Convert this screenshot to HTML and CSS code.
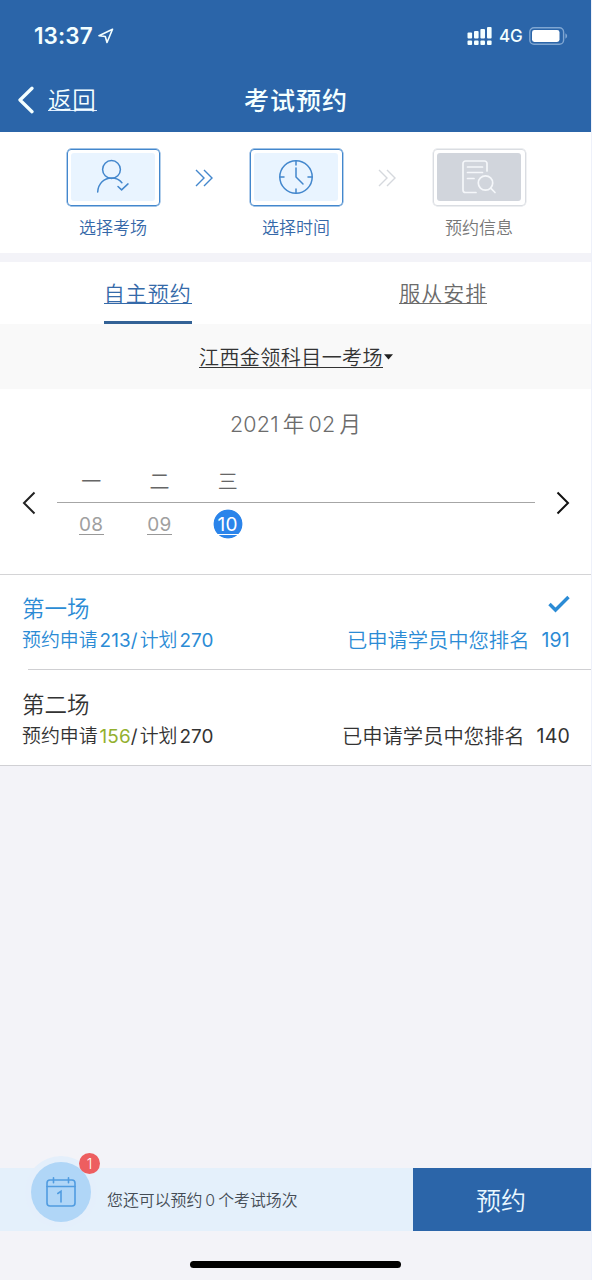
FILE: index.html
```html
<!DOCTYPE html>
<html lang="zh-CN">
<head>
<meta charset="utf-8">
<title>考试预约</title>
<link rel="stylesheet" href="styles.css">
</head>
<body>
<div class="app">
  <header class="header">
    <div class="status">
      <span class="clock">13:37</span>
      <svg class="location" width="16" height="16" viewBox="0 0 16 16"><path d="M14.500 1.300 1 7.700l6.300.8 1.700 6z" fill="none" stroke="currentColor" stroke-width="1.600" stroke-linejoin="round"/></svg>
      <svg class="signal" width="26" height="20" viewBox="0 0 26 20" fill="currentColor"><rect x="0.5" y="6.5" width="4.6" height="6" rx="1"/><rect x="7" y="5" width="4.6" height="7.5" rx="1"/><rect x="13.4" y="3" width="4.6" height="9.5" rx="1"/><rect x="20" y="1" width="4.6" height="11.5" rx="1"/><rect x="0.5" y="14.5" width="4.6" height="4.6" rx="1"/><rect x="7" y="14.5" width="4.6" height="4.6" rx="1"/><rect x="13.4" y="14.5" width="4.6" height="4.6" rx="1"/><rect x="20" y="14.5" width="4.6" height="4.6" rx="1"/></svg>
      <span class="network">4G</span>
      <svg class="battery" width="39" height="18" viewBox="0 0 39 18"><rect x="0.8" y="0.8" width="33.8" height="16.4" rx="4.2" fill="none" stroke="#7fa6d2" stroke-width="1.4"/><rect x="3" y="3" width="27.5" height="12" rx="2.4" fill="#fff"/><path d="M36.4 6.2q1.8 1 1.8 2.8t-1.8 2.8z" fill="#7fa6d2"/></svg>
    </div>
    <nav class="navbar">
      <a class="back"><svg width="18" height="28" viewBox="0 0 18 28"><path d="M15 2.3 3 14l12 11.7" fill="none" stroke="currentColor" stroke-width="3.3" stroke-linecap="round" stroke-linejoin="round"/></svg><span class="back-text">返回</span></a>
      <h1 class="title">考试预约</h1>
    </nav>
  </header>

  <section class="steps">
    <div class="step">
      <div class="step-box"><div class="step-fill"><svg width="36" height="36" viewBox="0 0 36 36" fill="none" stroke="currentColor" stroke-width="1.5" stroke-linecap="round" stroke-linejoin="round"><circle cx="16.5" cy="10.5" r="8.9"/><path d="M2.700 33c.5-8.500 6.500-14 13.800-14 4.200 0 8 1.700 10.400 4.700M23 27.500l3.600 3.400 6.400-6"/></svg></div></div>
      <span class="step-label">选择考场</span>
    </div>
    <svg class="chevrons" width="20" height="20" viewBox="0 0 20 20"><path d="M1 2l8 8-8 8M9 2l8 8-8 8" fill="none" stroke="currentColor" stroke-width="1.4"/></svg>
    <div class="step">
      <div class="step-box"><div class="step-fill"><svg width="36" height="36" viewBox="0 0 36 36" fill="none" stroke="currentColor" stroke-width="1.5" stroke-linecap="round"><circle cx="18" cy="18" r="16.200"/><path d="M18 2v4M18 30v4M2 18h4M30 18h4M18 9v9l7 7"/></svg></div></div>
      <span class="step-label">选择时间</span>
    </div>
    <svg class="chevrons chevrons-off" width="20" height="20" viewBox="0 0 20 20"><path d="M1 2l8 8-8 8M9 2l8 8-8 8" fill="none" stroke="currentColor" stroke-width="1.4"/></svg>
    <div class="step step-off">
      <div class="step-box"><div class="step-fill"><svg width="36" height="36" viewBox="0 0 36 36" fill="none" stroke="currentColor" stroke-width="1.7" stroke-linecap="round" stroke-linejoin="round"><path d="M26 12V4.500a2.500 2.500 0 0 0-2.500-2.500H4.500A2.500 2.500 0 0 0 2 4.500V31a2.500 2.500 0 0 0 2.500 2.500H15M6.500 8h15M6.500 13.500h15M6.500 19.500H13"/><circle cx="24.500" cy="24" r="7.200"/><path d="M29.700 29.200 34 33.500"/></svg></div></div>
      <span class="step-label">预约信息</span>
    </div>
  </section>

  <nav class="tabs">
    <a class="tab tab-active"><span class="tab-text">自主预约</span></a>
    <a class="tab"><span class="tab-text">服从安排</span></a>
  </nav>

  <div class="venue"><span class="venue-name">江西金领科目一考场</span><svg width="9" height="6" viewBox="0 0 9 6"><path d="M0 .2h9L4.500 5.500z" fill="#222"/></svg></div>

  <section class="calendar">
    <div class="month"><span>2021</span><span>年</span><span>02</span><span>月</span></div>
    <div class="week">
      <svg class="arrow" width="14" height="24" viewBox="0 0 14 24"><path d="M12.500 1.500 2 12l10.500 10.500" fill="none" stroke="#222" stroke-width="2"/></svg>
      <div class="days">
        <div class="day-row names"><span>一</span><span>二</span><span>三</span></div>
        <div class="day-row dates"><span><a class="date">08</a></span><span><a class="date">09</a></span><span class="selected"><a class="date">10</a></span></div>
      </div>
      <svg class="arrow" width="14" height="24" viewBox="0 0 14 24"><path d="M1.500 1.500 12 12 1.500 22.500" fill="none" stroke="#111" stroke-width="2"/></svg>
    </div>
  </section>

  <section class="sessions">
    <article class="session session-on">
      <div class="session-head"><h2 class="session-name">第一场</h2><svg width="22" height="18" viewBox="0 0 22 18"><path d="M1.500 9l6 6L20.500 2" fill="none" stroke="currentColor" stroke-width="3.400"/></svg></div>
      <div class="session-info"><p class="quota"><span>预约申请</span><span class="num">213/</span><span>计划</span><span class="num">270</span></p><p class="rank"><span>已申请学员中您排名</span><span class="rank-num">191</span></p></div>
    </article>
    <article class="session">
      <div class="session-head"><h2 class="session-name">第二场</h2></div>
      <div class="session-info"><p class="quota"><span>预约申请</span><span class="num"><span class="open">156</span>/</span><span>计划</span><span class="num">270</span></p><p class="rank"><span>已申请学员中您排名</span><span class="rank-num">140</span></p></div>
    </article>
  </section>

  <footer class="footer">
    <div class="bar">
      <div class="remain">
        <div class="calendar-halo"><div class="calendar-icon"><svg width="30" height="30" viewBox="0 0 30 30" fill="none" stroke="currentColor" stroke-width="1.600" stroke-linecap="round"><rect x="1" y="3" width="28" height="26" rx="3"/><path d="M1 9.500h28M7.500.800v5M22.500.800v5"/><path d="M11.800 16.500l3.200-2.200v10.700"/></svg></div><span class="badge">1</span></div>
        <p class="remain-text"><span>您还可以预约</span><span class="remain-num">0</span><span>个考试场次</span></p>
      </div>
      <button class="book">预约</button>
    </div>
    <div class="home"></div>
  </footer>
</div>
</body>
</html>
```
FILE: styles.css
```css
* { box-sizing: border-box; margin: 0; padding: 0; }
body {
  background: #f3f3f8;
  font-family: Inter, "Noto Sans CJK SC", sans-serif;
  font-weight: 350;
  color: #333;
}
svg { display: block; flex: none; }
.app { width: 592px; height: 1280px; display: flex; flex-direction: column; border-right: 1px solid #eef1fa; overflow: hidden; }

.header { height: 131.5px; background: #2b65a9; color: #f4ffff; }
.status { height: 70px; display: flex; align-items: center; padding: 2px 23px 0 34px; }
.clock { font-size: 22.5px; font-weight: 600; width: 59px; white-space: nowrap; letter-spacing: .1px; margin-top: -1px; }
.location { margin: 0 0 0 5px; }
.signal { margin-left: auto; }
.network { font-size: 17px; font-weight: 500; width: 24px; margin: 0 6px 0 6px; letter-spacing: -.2px; }
.navbar { height: 60px; display: grid; grid-template-columns: 1fr auto 1fr; align-items: center; padding: 0 17px; }
.back { display: flex; align-items: center; gap: 13px; }
.back-text { font-size: 23.5px; letter-spacing: .8px; line-height: 27px; height: 24px; border-bottom: 1.500px solid #dcecff; margin-top: -2px; }
.title { font-size: 25px; font-weight: 500; letter-spacing: 1px; line-height: 36px; margin-top: 1px; padding-left: 1px; }

.steps { height: 121.500px; background: #fff; display: flex; justify-content: center; padding: 17px 0 0 1px; gap: 35px; color: #4387cd; }
.step { width: 93px; display: flex; flex-direction: column; align-items: center; gap: 9px; }
.step-box { width: 93px; height: 57px; padding: 3.500px; border: 1.500px solid #4387cd; border-radius: 4px; box-shadow: 0 0 0 .4px currentColor; }
.step-fill { height: 100%; background: #e9f4ff; border-radius: 3px; display: flex; align-items: center; justify-content: center; }
.step-label { font-size: 17px; line-height: 26px; color: #3668a8; white-space: nowrap; }
.chevrons { margin-top: 19px; }
.chevrons-off { color: #d5d8dd; }
.step-off { color: #f5f7fa; }
.step-off .step-box { border-color: #dadde2; box-shadow: 0 0 0 .4px #dadde2; }
.step-off .step-fill { background: #d1d5dc; }
.step-off .step-label { color: #777; }

.tabs { height: 71px; background: #fff; border-top: 9px solid #f3f3f8; display: grid; grid-template-columns: 1fr 1fr; justify-items: center; color: #6b6b6b; }
.tab { width: 88px; height: 62px; padding-top: 19px; }
.tab-text { display: block; height: 23px; line-height: 26px; font-size: 21px; letter-spacing: 1px; white-space: nowrap; border-bottom: 1.500px solid currentColor; }
.tab-active { color: #356aa9; border-bottom: 3px solid #336296; }

.venue { height: 65px; background: #f9f9f9; display: flex; align-items: center; justify-content: center; gap: 1px; color: #333; padding-left: 1px; }
.venue-name { font-size: 20px; letter-spacing: .45px; line-height: 26px; height: 23px; border-bottom: 1.500px solid #333; white-space: nowrap; }

.calendar { height: 186px; background: #fff; border-bottom: 1px solid #d4d4d6; padding-top: 20px; }
.month { display: flex; justify-content: center; gap: 4px; font-size: 21.500px; line-height: 30px; color: #6c6c6c; letter-spacing: .2px; }
.week { display: flex; align-items: center; justify-content: space-between; padding: 26px 21px 0 22px; }
.arrow { margin-top: -2px; }
.days { width: 478px; }
.day-row { display: flex; }
.day-row > span { width: 68.300px; height: 36px; display: flex; align-items: center; justify-content: center; }
.names { border-bottom: 1px solid #a6a6a6; height: 38px; font-size: 20px; color: #666; align-items: flex-start; }
.names > span { height: 31px; }
.dates { padding-top: 3px; }
.date { font-size: 19px; font-weight: 400; line-height: 22px; height: 21px; border-bottom: 1.500px solid #999; color: #a0a0a0; letter-spacing: .3px; width: 25px; text-align: center; }
.selected { background: radial-gradient(circle at 50% 50%, #2b84ea 14px, transparent 14.800px) no-repeat; }
.selected .date { color: #fff; border-color: #fff; }

.sessions { background: #fff; border-bottom: 1px solid #d0d0d4; }
.session { height: 95px; padding: 20px 21px 0 22px; color: #333; }
.session-on { padding-top: 19px; color: #2b8bd5; background: linear-gradient(#cfcfd2, #cfcfd2) 28px 100% / 564px 1px no-repeat; }
.session-head { display: flex; justify-content: space-between; height: 32px; }
.session-head svg { margin-top: 1px; }
.session-name { font-size: 22.500px; font-weight: 350; line-height: 30px; }
.session-info { display: flex; justify-content: space-between; line-height: 29px; white-space: nowrap; }
.quota { display: flex; gap: 2px; font-size: 18.900px; }
.num { font-weight: 380; letter-spacing: .1px; }
.open { color: #93b02e; }
.rank { display: flex; gap: 12px; font-size: 20.300px; }
.rank-num { font-size: 19.500px; font-weight: 380; letter-spacing: .2px; }

.footer { margin-top: auto; height: 112px; display: flex; flex-direction: column; align-items: center; }
.bar { width: 591px; height: 63px; display: flex; background: #e4f0fb; }
.remain { flex: 1; display: flex; align-items: center; padding-left: 25px; }
.calendar-halo { width: 72px; height: 72px; margin-top: -16px; border-radius: 50%; background: #e4effb; display: flex; align-items: center; justify-content: center; position: relative; }
.calendar-icon { width: 60px; height: 60px; border-radius: 50%; background: #b0d6f7; color: #509ce0; display: flex; align-items: center; justify-content: center; }
.badge { position: absolute; left: 54px; top: -3px; width: 21px; height: 21px; border-radius: 50%; background: #ed5e60; color: #fff; font-size: 14px; line-height: 21px; text-align: center; }
.remain-text { display: flex; gap: 3px; margin-left: 10px; padding-top: 2px; font-size: 15.900px; line-height: 24px; color: #444c55; white-space: nowrap; }
.book { width: 178px; border: 0; background: #2b65a9; color: #e9f7ff; font: 350 25px/36px Inter, "Noto Sans CJK SC", sans-serif; padding: 2px 2px 0 0; }
.home { width: 211px; height: 7px; border-radius: 4px; background: #000; margin-top: 30px; }
```
